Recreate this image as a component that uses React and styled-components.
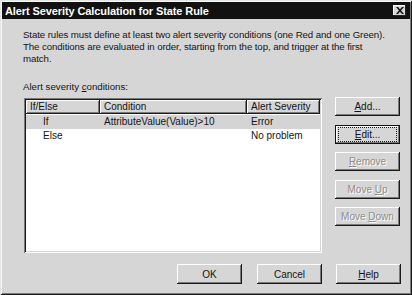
import React from 'react'
import styled, { createGlobalStyle } from 'styled-components'

const GlobalStyle = createGlobalStyle`
  html, body {
    margin: 0;
    padding: 0;
    background: #d6d6d6;
  }
  * { box-sizing: border-box; }
`

const rows = [
  { kind: 'If', condition: 'AttributeValue(Value)>10', severity: 'Error', selected: true },
  { kind: 'Else', condition: '', severity: 'No problem', selected: false },
]

function App() {
  return (
    <>
      <GlobalStyle />
      <Window>
        <TitleBar>
          <Title>Alert Severity Calculation for State Rule</Title>
          <CloseBtn>
            <svg width="8" height="7" viewBox="0 0 8 7">
              <path d="M0 0h2l2 2.2L6 0h2L5 3.5 8 7H6L4 4.8 2 7H0l3-3.5z" fill="#111" />
            </svg>
          </CloseBtn>
        </TitleBar>

        <Body>
          <Intro>
            State rules must define at least two alert severity conditions (one Red and one Green).<br />
            The conditions are evaluated in order, starting from the top, and trigger at the first<br />
            match.
          </Intro>

          <Label>Alert severity <u>c</u>onditions:</Label>

          <MainRow>
            <ListBox>
              <HeaderRow>
                <HeaderCell $w={74}>If/Else</HeaderCell>
                <HeaderCell $w={147}>Condition</HeaderCell>
                <HeaderCell $w={73}>Alert Severity</HeaderCell>
                <HeaderFill />
              </HeaderRow>
              {rows.map((r) => (
                <Row key={r.kind} $selected={r.selected}>
                  <Cell $w={74} $indent>{r.kind}</Cell>
                  <Cell $w={147}>{r.condition}</Cell>
                  <Cell $w={73}>{r.severity}</Cell>
                </Row>
              ))}
            </ListBox>

            <SideButtons>
              <Button><span><u>A</u>dd...</span></Button>
              <Button $default><Focus><span><u>E</u>dit...</span></Focus></Button>
              <Button disabled><span><u>R</u>emove</span></Button>
              <Button disabled><span>Move <u>U</u>p</span></Button>
              <Button disabled><span>Move <u>D</u>own</span></Button>
            </SideButtons>
          </MainRow>

          <Footer>
            <Button>OK</Button>
            <Button>Cancel</Button>
            <Button><span><u>H</u>elp</span></Button>
          </Footer>
        </Body>
      </Window>
    </>
  )
}

let Window = styled.div`
  width: 412px;
  height: 295px;
  background: #d6d6d6;
  display: flex;
  flex-direction: column;
  padding: 2px 2px 3px 2px;
  box-shadow: inset 1px 1px #e4e4e4, inset -1px -1px #1a1a1a,
    inset 2px 2px #fafafa, inset -2px -2px #7a7a7a;
  font-family: "Liberation Sans", Arial, sans-serif;
  font-size: 10px;
  color: #141414;
`

let TitleBar = styled.div`
  height: 17px;
  background: #111;
  display: flex;
  align-items: center;
  justify-content: space-between;
  padding: 0 4px 0 3px;
`

let Title = styled.div`
  color: #fff;
  font-weight: 700;
  font-size: 11px;
  letter-spacing: -0.1px;
`

let CloseBtn = styled.div`
  width: 13px;
  height: 11px;
  background: #d6d6d6;
  display: flex;
  align-items: center;
  justify-content: center;
  box-shadow: inset -1px -1px #222, inset 1px 1px #fff;
`

let Body = styled.div`
  flex: 1;
  display: flex;
  flex-direction: column;
  padding: 10px 9px 0 21px;
`

let Intro = styled.div`
  line-height: 12px;
  white-space: nowrap;
  font-size: 9.7px;
  letter-spacing: -0.1px;
`

let Label = styled.div`
  line-height: 12px;
  margin-top: 16px;
  font-size: 9.7px;
`

let MainRow = styled.div`
  display: flex;
  gap: 13px;
  margin-top: 5px;
  margin-left: 1px;
`

let ListBox = styled.div`
  width: 298px;
  height: 155px;
  background: #fff;
  padding: 2px;
  box-shadow: inset 1px 1px #7a7a7a, inset -1px -1px #fff,
    inset 2px 2px #1a1a1a, inset -2px -2px #d6d6d6;
`

let HeaderRow = styled.div`
  display: flex;
  height: 14px;
`

let HeaderCell = styled.div`
  width: ${(p) => p.$w}px;
  height: 14px;
  line-height: 13px;
  padding-left: 4px;
  background: #d6d6d6;
  box-shadow: inset -1px -1px #1a1a1a, inset 1px 1px #fff, inset -2px -2px #7a7a7a;
  white-space: nowrap;
  overflow: hidden;
`

let HeaderFill = styled.div`
  flex: 1;
  background: #d6d6d6;
  box-shadow: inset 1px 1px #fff, inset 0 -1px #1a1a1a;
`

let Row = styled.div`
  display: flex;
  height: 14px;
  margin-top: ${(p) => (p.$selected ? '1px' : '0')};
  background: ${(p) => (p.$selected ? '#d4d4d4' : 'transparent')};
`

let Cell = styled.div`
  width: ${(p) => p.$w}px;
  line-height: 14px;
  padding-left: ${(p) => (p.$indent ? '17px' : '4px')};
  white-space: nowrap;
`

let SideButtons = styled.div`
  display: flex;
  flex-direction: column;
  gap: 8.5px;
  margin-top: -1px;
`

let Button = styled.button`
  width: 65px;
  height: 19px;
  padding: 0;
  border: none;
  background: #d6d6d6;
  font-family: inherit;
  font-size: 10px;
  color: #141414;
  display: flex;
  align-items: center;
  justify-content: center;
  white-space: pre;
  box-shadow: ${(p) =>
    p.$default
      ? 'inset 0 0 0 1px #111, inset -2px -2px #7a7a7a, inset 2px 2px #fff'
      : 'inset -1px -1px #1a1a1a, inset 1px 1px #fff, inset -2px -2px #7a7a7a'};

  &:disabled {
    color: #8c8c8c;
    text-shadow: 1px 1px #fff;
  }
`

let Focus = styled.span`
  display: flex;
  align-items: center;
  justify-content: center;
  width: 57px;
  height: 13px;
  outline: 1px dotted #222;
`

let Footer = styled.div`
  display: flex;
  justify-content: flex-end;
  gap: 14px;
  margin-top: 11px;
  height: 20px;

  & > button {
    height: 20px;
  }
  & > button:first-child {
    margin-right: 1px;
  }
`

export default App
